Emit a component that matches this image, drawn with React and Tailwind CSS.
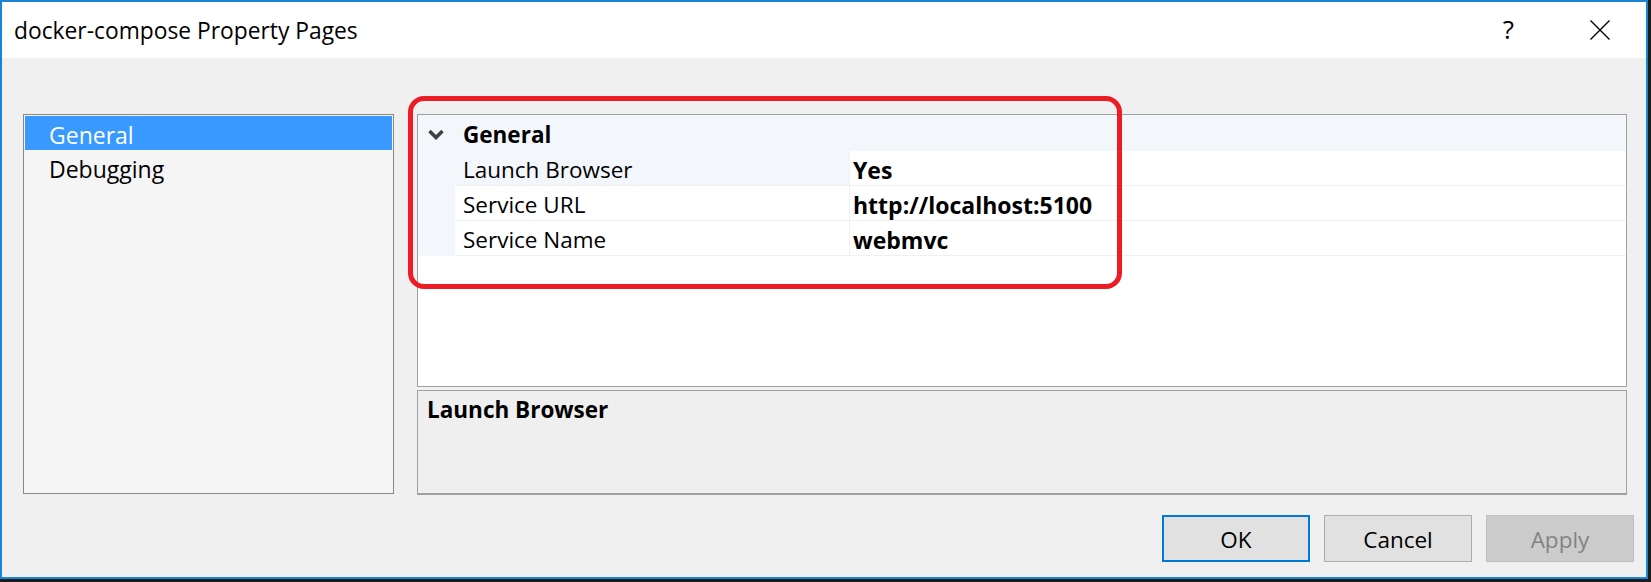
import React from "react";

const rows = [
    { name: "Launch Browser", value: "Yes", selected: true },
    { name: "Service URL", value: "http://localhost:5100" },
    { name: "Service Name", value: "webmvc" },
];

function CloseIcon() {
    return (
        <svg width="20" height="20" viewBox="0 0 20 20" fill="none" stroke="#000" strokeWidth="1.4">
            <path d="M0.5 0.5 L19.5 19.5 M19.5 0.5 L0.5 19.5" />
        </svg>
    );
}

function Chevron() {
    return (
        <svg width="16" height="11" viewBox="0 0 16 11" fill="none" stroke="#404040" strokeWidth="3.6">
            <path d="M1.5 2 L8 8.5 L14.5 2" />
        </svg>
    );
}

function DialogButton({ label, primary, disabled }) {
    return (
        <button
            className={`w-[148px] h-[47px] flex items-center justify-center pt-[4px] leading-none ${primary
                ? "border-2 border-[#0078d7] bg-[#e1e1e1] text-black"
                : disabled
                    ? "border border-[#bfbfbf] bg-[#cccccc] text-[#838383]"
                    : "border border-[#adadad] bg-[#e1e1e1] text-black"
                }`}
        >
            {label}
        </button>
    );
}

export default function App() {
    return (
        <div className="relative w-[1651px] h-[582px] bg-[#1c1c1c] overflow-hidden font-['Open_Sans',sans-serif] text-[22.5px] text-black">
            <div className="w-[1648px] h-[579px] border-2 border-[#1883d7] bg-[#f0f0f0] flex flex-col">
                {/* TITLE BAR */}
                <div className="h-[56px] bg-white flex items-center shrink-0">
                    <span className="pl-[12px] pt-[2px] text-[22.8px] leading-none">docker-compose Property Pages</span>
                    <div className="flex-1" />
                    <span className="text-[26px] leading-none pb-[2px]">?</span>
                    <div className="ml-[76px] mr-[36px] flex items-center">
                        <CloseIcon />
                    </div>
                </div>

                {/* BODY */}
                <div className="flex-1 flex flex-col pt-[56px] pl-[21px]">
                    <div className="flex gap-[23px]">
                        {/* PAGE LIST */}
                        <div className="w-[371px] h-[380px] border border-[#828790] bg-[#f5f5f5] p-[1px] text-[23px]">
                            <div className="h-[34px] bg-[#3999ff] text-white flex items-center pl-[24px] pt-[4px] leading-none">General</div>
                            <div className="h-[34px] flex items-center pl-[24px] pt-[4px] leading-none">Debugging</div>
                        </div>

                        {/* RIGHT SIDE */}
                        <div className="w-[1210px] flex flex-col">
                            <div className="h-[273px] border border-[#a0a0a0] bg-white flex flex-col">
                                <div className="h-[36px] bg-[#f3f6fb] flex items-center">
                                    <div className="w-[37px] pl-[10px] pt-[2px] flex items-center">
                                        <Chevron />
                                    </div>
                                    <span className="pl-[8px] pt-[4px] font-bold leading-none">General</span>
                                </div>
                                {rows.map((row) => (
                                    <div key={row.name} className="flex h-[35px]">
                                        <div className="w-[37px] bg-[#f3f6fb]" />
                                        <div
                                            className={`w-[394px] border-b border-[#eef0f3] flex items-center pl-[8px] pt-[4px] leading-none ${row.selected ? "bg-[#f3f6fb]" : "bg-white"}`}
                                        >
                                            {row.name}
                                        </div>
                                        <div className="flex-1 border-b border-l border-[#eef0f3] flex items-center pl-[3px] pt-[4px] text-[23px] font-bold leading-none">
                                            {row.value}
                                        </div>
                                    </div>
                                ))}
                            </div>

                            {/* DESCRIPTION */}
                            <div className="mt-[3px] h-[105px] border border-b-2 border-[#a0a0a0] bg-[#efefef] pl-[9px] pt-[8px]">
                                <p className="font-bold leading-none">Launch Browser</p>
                            </div>
                        </div>
                    </div>

                    {/* BUTTONS */}
                    <div className="mt-[20px] flex justify-end gap-[14px] pr-[12px]">
                        <DialogButton label="OK" primary />
                        <DialogButton label="Cancel" />
                        <DialogButton label="Apply" disabled />
                    </div>
                </div>
            </div>

            {/* annotation drawn over the screenshot */}
            <div className="absolute left-[408px] top-[96px] w-[714px] h-[193px] border-[5px] border-[#ed1c24] rounded-[16px] pointer-events-none" />
        </div>
    );
}
